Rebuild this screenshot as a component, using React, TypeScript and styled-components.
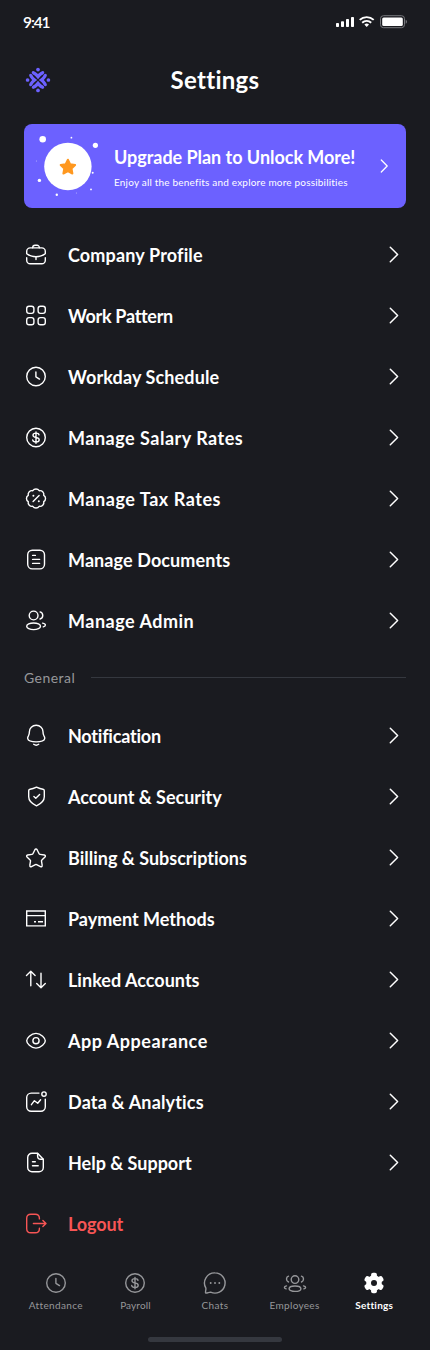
import React from "react";
import type { ReactNode } from "react";
import styled, { createGlobalStyle } from "styled-components";

const color = {
  bg: "#1a1b20",
  text: "#ffffff",
  muted: "#96979a",
  line: "#35383f",
  brand: "#6c61ff",
  danger: "#f75555",
  star: "#ff981f",
};

const GlobalStyle = createGlobalStyle`
  *, *::before, *::after { box-sizing: border-box; }
  body {
    margin: 0;
    background: ${color.bg};
    color: ${color.text};
    font-family: Lato, "Open Sans", sans-serif;
    font-variant-ligatures: none;
  }
`;

const Screen = styled.div`
  display: flex;
  flex-direction: column;
  width: 430px;
  height: 1350px;
  margin: 0 auto;
  overflow: hidden;
  background: ${color.bg};
`;

const StatusBar = styled.div`
  display: flex;
  align-items: center;
  justify-content: space-between;
  height: 44px;
  padding: 0 23px;
`;

const Clock = styled.span`
  padding-bottom: 1px;
  font-size: 15.5px;
  font-weight: 600;
  line-height: 20px;
  letter-spacing: -1.1px;
`;

const StatusIcons = styled.svg`
  display: block;
  width: 71px;
  height: 14px;
`;

const Header = styled.header`
  display: grid;
  grid-template-columns: 28px 1fr 28px;
  align-items: center;
  height: 72px;
  padding: 0 24px;
`;

const Title = styled.h1`
  margin: 0;
  font-size: 24px;
  font-weight: 700;
  line-height: 30px;
  letter-spacing: 0.28px;
  text-align: center;
`;

const Banner = styled.section`
  display: flex;
  align-items: center;
  height: 84px;
  margin: 8px 24px 0;
  padding: 0 17px 0 0;
  border-radius: 8px;
  background: ${color.brand};
`;

const BannerText = styled.div`
  display: flex;
  flex: 1;
  flex-direction: column;
  gap: 7px;
  padding-top: 2px;
`;

const BannerTitle = styled.h2`
  margin: 0;
  font-size: 18px;
  font-weight: 700;
  line-height: 22px;
  letter-spacing: -0.03px;
  white-space: nowrap;
`;

const BannerNote = styled.p`
  margin: 0;
  font-size: 10px;
  font-weight: 400;
  line-height: 14px;
  letter-spacing: 0.19px;
  white-space: nowrap;
`;

const Menu = styled.nav<{ $top?: number }>`
  display: flex;
  flex-direction: column;
  padding: ${(p) => p.$top ?? 0}px 24px 0;
`;

const MenuRow = styled.div<{ $danger?: boolean }>`
  display: flex;
  align-items: center;
  height: 61px;
  color: ${(p) => (p.$danger ? color.danger : color.text)};
`;

const MenuLabel = styled.span<{ $tracking: number }>`
  flex: 1;
  padding: 1px 0 0 20px;
  font-size: 18px;
  font-weight: 700;
  line-height: 24px;
  letter-spacing: ${(p) => p.$tracking}px;
  white-space: nowrap;
`;

const Divider = styled.div`
  display: flex;
  align-items: center;
  gap: 16px;
  height: 54px;
  padding: 0 24px;
  color: ${color.muted};
  font-size: 14px;
  font-weight: 400;
  line-height: 20px;
  letter-spacing: 0.45px;
`;

const DividerLine = styled.span`
  flex: 1;
  height: 1px;
  margin-bottom: 1px;
  background: ${color.line};
`;

const TabBar = styled.nav`
  display: grid;
  grid-template-columns: repeat(5, 1fr);
  height: 83px;
  padding: 17px 16px 0;
`;

const Tab = styled.div<{ $active?: boolean }>`
  display: flex;
  flex-direction: column;
  align-items: center;
  gap: 3px;
  color: ${(p) => (p.$active ? color.text : color.muted)};
`;

const TabLabel = styled.span<{ $bold?: boolean; $tracking: number }>`
  font-size: 10px;
  font-weight: ${(p) => (p.$bold ? 700 : 400)};
  line-height: 14px;
  letter-spacing: ${(p) => p.$tracking}px;
`;

const HomeIndicator = styled.div`
  align-self: center;
  width: 134px;
  height: 5px;
  border-radius: 3px;
  background: ${color.line};
`;

const IconSvg = styled.svg<{ $stroke?: number; $tall?: boolean }>`
  display: block;
  flex: none;
  width: 24px;
  height: ${(p) => (p.$tall ? 25 : 24)}px;
  overflow: visible;
  fill: none;
  stroke: currentColor;
  stroke-width: ${(p) => p.$stroke ?? 1.4};
  stroke-linecap: round;
  stroke-linejoin: round;
`;

const LogoSvg = styled.svg`
  display: block;
  width: 28px;
  height: 28px;
  fill: ${color.brand};
`;

const BadgeSvg = styled.svg`
  display: block;
  flex: none;
  width: 90px;
  height: 84px;
  fill: #fff;
`;

const BannerArrow = styled.svg`
  width: 10px;
  height: 16px;
  fill: none;
  stroke: #fff;
  stroke-width: 1.3;
  stroke-linecap: round;
  stroke-linejoin: round;
`;

// Eight convex arcs joined at shallow valleys.
const sealPath = (() => {
  const pts = Array.from({ length: 8 }, (_, k) => {
    const a = ((22.5 + 45 * k) * Math.PI) / 180;
    return `${(12 + 8.4 * Math.sin(a)).toFixed(2)} ${(12 - 8.4 * Math.cos(a)).toFixed(2)}`;
  });
  return `M${pts[7]}${pts.map((p) => `A3.8 3.8 0 0 1 ${p}`).join("")}z`;
})();

const dollar = (
  <>
    <circle cx="12" cy="12" r="9.3" />
    <path d="M15 9.4c-.2-1.1-1.3-1.8-3-1.8s-3 .8-3 2.1c0 1.4 1.3 1.9 3 2.2s3.2.9 3.2 2.4c0 1.4-1.3 2.2-3.2 2.2s-3.1-.8-3.3-2M12 6.4v11.4" />
  </>
);

const clock = (
  <>
    <circle cx="12" cy="12" r="9.3" />
    <path d="M11.9 7.5v4.8l3.6 2.3" />
  </>
);

const glyphs: Record<string, ReactNode> = {
  briefcase: (
    <>
      <path d="M8.7 5.2V5A2.3 2.3 0 0 1 11 2.7h2A2.3 2.3 0 0 1 15.3 5v.2" />
      <path d="M6.2 5.4h11.6a3.5 3.5 0 0 1 3.5 3.5v2.3c-2.5 1.9-5.7 3-9.3 3s-6.8-1.1-9.3-3V8.9a3.5 3.5 0 0 1 3.5-3.5z" />
      <path d="M2.7 15.2v2.5a3.6 3.6 0 0 0 3.6 3.6h11.4a3.6 3.6 0 0 0 3.6-3.6v-2.5M12 14.3v2.7" />
    </>
  ),
  grid: (
    <>
      <rect x="2.7" y="2.7" width="7.2" height="7.2" rx="2.3" />
      <rect x="14.1" y="2.7" width="7.2" height="7.2" rx="2.3" />
      <rect x="2.7" y="14.1" width="7.2" height="7.2" rx="2.3" />
      <rect x="14.1" y="14.1" width="7.2" height="7.2" rx="2.3" />
    </>
  ),
  clock,
  dollar,
  seal: (
    <>
      <path d={sealPath} />
      <path d="M9.1 14.9l6-6" />
      <path strokeWidth="2" d="M9.4 9.3h.01M14.8 14.8h.01" />
    </>
  ),
  document: (
    <>
      <rect x="3.7" y="2.7" width="16.8" height="18.7" rx="4.6" />
      <path d="M8.6 7.9h2.8M8.6 11.9h7M8.6 15.9h7" />
    </>
  ),
  users: (
    <>
      <circle cx="9.6" cy="7" r="4.4" />
      <ellipse cx="9.6" cy="17.8" rx="6.9" ry="3.3" />
      <path d="M16.1 3.4a3.7 3.7 0 0 1 0 7.1M18.6 14.6c1.7.3 2.8 1 2.8 1.9s-.8 1.5-2.1 1.9" />
    </>
  ),
  bell: (
    <>
      <path d="M12.2 1.8c-4 0-6.8 3-6.8 6.5 0 2.4-.4 3-1 4.1-.6 1-.9 1.9-.7 2.8.5 2.4 4 3.2 8.5 3.2s8-.8 8.5-3.2c.2-.9-.1-1.8-.7-2.8-.6-1.1-1-1.7-1-4.1 0-3.5-2.8-6.5-6.8-6.5z" />
      <path d="M9.7 20.8c1.5 1.1 3.5 1.1 5 0" />
    </>
  ),
  shield: (
    <>
      <path d="M12.5 2.7c1.9.9 4.4 1.8 6.5 2.1.8.1 1.3.7 1.3 1.5v5.9c0 4.5-3.3 7-7.8 9.1-4.5-2.1-7.8-4.6-7.8-9.1V6.3c0-.8.5-1.4 1.3-1.5 2.1-.3 4.6-1.2 6.500-2.100z" />
      <path d="M9.9 12l1.9 1.8 3.8-3.8" />
    </>
  ),
  star: (
    <path d="M13.1 4.2l2 4a1.3 1.3 0 0 0 1 .7l4.3.6c1 .2 1.3 1.3.6 2l-3.1 3a1.3 1.3 0 0 0-.4 1.2l.7 4.2c.2 1-.8 1.7-1.7 1.3l-3.9-2a1.3 1.3 0 0 0-1.2 0l-3.9 2c-.9.4-1.9-.3-1.7-1.3l.7-4.2a1.3 1.3 0 0 0-.4-1.2L3 11.5c-.7-.7-.4-1.8.6-2l4.3-.6a1.3 1.3 0 0 0 1-.7l2-4c.5-.9 1.7-.9 2.2 0z" />
  ),
  card: (
    <g strokeLinejoin="miter" strokeLinecap="butt">
      <path d="M2.7 4.5h18.6v14.9H2.7zM2.7 9.1h18.6M10 15.2h2M14 15.2h5" />
    </g>
  ),
  transfer: (
    <path d="M6.8 18.3V4M2.5 7.9L6.8 3.8l4.3 4.1M17 5.8v14.3M12.7 16.1l4.3 4.1 4.3-4.1" />
  ),
  eye: (
    <>
      <path d="M2.7 12.2c0-2.4 4-7.3 9.3-7.3s9.3 4.9 9.3 7.3-4 7.4-9.3 7.4-9.3-5-9.3-7.4z" />
      <circle cx="12" cy="12.2" r="3.1" />
    </>
  ),
  analytics: (
    <>
      <path d="M15 3.6H7.2a4.5 4.5 0 0 0-4.5 4.5v9.2a4.5 4.5 0 0 0 4.5 4.5h9.6a4.5 4.5 0 0 0 4.5-4.5V9.6" />
      <circle cx="20" cy="4.6" r="2.2" />
      <path d="M7.4 15.2l3-4 3.3 2.6 2.9-3.6" />
    </>
  ),
  page: (
    <>
      <path d="M13.6 2.7H8A4.300 4.300 0 0 0 3.700 7v10A4.300 4.300 0 0 0 8 21.300h7A4.300 4.300 0 0 0 19.300 17V8.700z" />
      <path d="M13.6 2.9v2.5c0 1.9 1.3 3.3 3.2 3.3h2.4M8.5 11.2h2.8M8.5 15.2h5.7" />
    </>
  ),
  logout: (
    <path d="M15.4 7.4V6.8c0-2.6-1.5-4.1-4.1-4.1H6.8c-2.6 0-4.1 1.5-4.1 4.1v10.4c0 2.6 1.5 4.1 4.1 4.1h4.5c2.6 0 4.1-1.5 4.1-4.1v-.6M9.4 12h12.4M18.9 8.9L22 12l-3.1 3.1" />
  ),
  chat: (
    <>
      <path d="M12 1.9a10.1 10.1 0 1 1-4.4 19.2c-1.6-.1-3.3 1.2-4.9.9-.9-.3.5-2.8.2-4.9A10.1 10.1 0 0 1 12 1.9z" />
      <path strokeWidth="1.9" d="M7.7 12h.01M12 12h.01M16.3 12h.01" />
    </>
  ),
  team: (
    <>
      <circle cx="12" cy="8.6" r="3.8" />
      <ellipse cx="12" cy="17.7" rx="5.9" ry="2.7" />
      <path d="M5.5 5.2a3.1 3.1 0 0 0 0 5.8M18.5 5.2a3.1 3.1 0 0 1 0 5.8M3.5 14.9c-1.3.3-2.1.8-2.1 1.5s.6 1.2 1.7 1.5M20.5 14.9c1.3.3 2.1.8 2.1 1.5s-.6 1.2-1.7 1.5" />
    </>
  ),
  gear: (
    <g fill="currentColor" stroke="none" transform="translate(12 12)">
      <circle r="7.8" />
      {[0, 60, 120, 180, 240, 300].map((a) => (
        <rect key={a} x="-2.9" y="-10.2" width="5.8" height="7" rx="1.9" transform={`rotate(${a})`} />
      ))}
      <circle r="3" fill={color.bg} />
    </g>
  ),
  chevron: <path d="M8.3 4.8l7.3 7.2-7.3 7.2" />,
};

// The tall box adds half a unit above and below, so the glyph centres exactly in an odd-height row.
function Icon({ name, stroke, tall }: { name: string; stroke?: number; tall?: boolean }) {
  return (
    <IconSvg viewBox={tall ? "0 -0.5 24 25" : "0 0 24 24"} $stroke={stroke} $tall={tall} aria-hidden="true">
      {glyphs[name]}
    </IconSvg>
  );
}

function Logo() {
  return (
    <LogoSvg viewBox="-14 -14 28 28" aria-hidden="true">
      {[0, 90, 180, 270].map((a) => (
        <g key={a} transform={`rotate(${a})`}>
          <circle cy="-10.4" r="1.85" />
          <path d="M0-.8L-2.1-3.3C-3-4.500-4.300-5-5.600-6-7.100-7.200-5.900-9.300-4.200-8.800-2.500-8.200-1.300-7 0-5.900 1.300-7 2.500-8.200 4.200-8.800 5.900-9.300 7.100-7.200 5.600-6 4.300-5 3-4.500 2.100-3.300z" />
        </g>
      ))}
    </LogoSvg>
  );
}

const sparkles: [number, number, number][] = [
  [18.7, 15.3, 3.3],
  [47.4, 13.7, 0.9],
  [71.4, 21.3, 2.6],
  [68.7, 48.7, 1],
  [15.4, 56.4, 1.7],
  [32.8, 70.7, 1.2],
  [67, 65.4, 0.9],
  [12.3, 37, 0.4],
  [52.3, 69, 0.4],
];

function PlanBadge() {
  return (
    <BadgeSvg viewBox="0 0 90 84" aria-hidden="true">
      {sparkles.map(([x, y, r]) => (
        <circle key={`${x}-${y}`} cx={x} cy={y} r={r} />
      ))}
      <circle cx="43.9" cy="42.5" r="23.7" />
      <path
        fill={color.star}
        stroke={color.star}
        strokeWidth="2"
        strokeLinejoin="round"
        d="M43.9 35.7l2.2 4.6 5 .7-3.6 3.5.9 5-4.5-2.4-4.5 2.4.9-5-3.6-3.5 5-.7z"
      />
    </BadgeSvg>
  );
}

function DeviceStatus() {
  return (
    <StatusIcons viewBox="336 16 71 14" aria-hidden="true">
      <g fill="#fff">
        <rect x="336" y="24" width="3" height="4" rx="0.8" />
        <rect x="341" y="22.2" width="3" height="5.8" rx="0.8" />
        <rect x="346" y="20" width="3" height="8" rx="0.8" />
        <rect x="351" y="18" width="3" height="10" rx="0.8" />
        <rect x="382.2" y="18.5" width="20.6" height="8.5" rx="1.5" />
        <path d="M366.7 27.9l-2.3-2.4a3.4 3.4 0 0 1 4.6 0z" />
      </g>
      <g fill="none" stroke="#fff" strokeWidth="1.9">
        <path d="M359.7 20.9a10.1 10.1 0 0 1 14 0M362.2 23.7a6.5 6.5 0 0 1 9 0" />
      </g>
      <rect x="380.5" y="16.7" width="24" height="12" rx="3" fill="none" stroke="#77787c" />
      <path d="M405.7 20.8v4a2.2 2.2 0 0 0 0-4z" fill="#77787c" />
    </StatusIcons>
  );
}

type Item = { icon: string; label: string; tracking: number; danger?: boolean };

const company: Item[] = [
  { icon: "briefcase", label: "Company Profile", tracking: 0.15 },
  { icon: "grid", label: "Work Pattern", tracking: -0.3 },
  { icon: "clock", label: "Workday Schedule", tracking: 0.12 },
  { icon: "dollar", label: "Manage Salary Rates", tracking: 0.5 },
  { icon: "seal", label: "Manage Tax Rates", tracking: 0.55 },
  { icon: "document", label: "Manage Documents", tracking: 0.1 },
  { icon: "users", label: "Manage Admin", tracking: 0.5 },
];

const general: Item[] = [
  { icon: "bell", label: "Notification", tracking: -0.22 },
  { icon: "shield", label: "Account & Security", tracking: -0.02 },
  { icon: "star", label: "Billing & Subscriptions", tracking: 0 },
  { icon: "card", label: "Payment Methods", tracking: 0.01 },
  { icon: "transfer", label: "Linked Accounts", tracking: 0.02 },
  { icon: "eye", label: "App Appearance", tracking: 0.53 },
  { icon: "analytics", label: "Data & Analytics", tracking: 0.17 },
  { icon: "page", label: "Help & Support", tracking: -0.01 },
  { icon: "logout", label: "Logout", tracking: -0.1, danger: true },
];

const tabs = [
  { icon: "clock", label: "Attendance", tracking: 0.35 },
  { icon: "dollar", label: "Payroll", tracking: 0.12 },
  { icon: "chat", label: "Chats", tracking: 0.38 },
  { icon: "team", label: "Employees", tracking: 0.3 },
  { icon: "gear", label: "Settings", tracking: 0.25, active: true },
];

function MenuList({ items, top }: { items: Item[]; top?: number }) {
  return (
    <Menu $top={top}>
      {items.map((item) => (
        <MenuRow key={item.label} $danger={item.danger}>
          <Icon name={item.icon} tall />
          <MenuLabel $tracking={item.tracking}>{item.label}</MenuLabel>
          {!item.danger && <Icon name="chevron" stroke={1.5} tall />}
        </MenuRow>
      ))}
    </Menu>
  );
}

export default function App() {
  return (
    <>
      <GlobalStyle />
      <Screen>
        <StatusBar>
          <Clock>9:41</Clock>
          <DeviceStatus />
        </StatusBar>
        <Header>
          <Logo />
          <Title>Settings</Title>
        </Header>
        <Banner>
          <PlanBadge />
          <BannerText>
            <BannerTitle>Upgrade Plan to Unlock More!</BannerTitle>
            <BannerNote>Enjoy all the benefits and explore more possibilities</BannerNote>
          </BannerText>
          <BannerArrow viewBox="0 0 10 16" aria-hidden="true">
            <path d="M2.3 2l5.9 6-5.9 6" />
          </BannerArrow>
        </Banner>
        <MenuList items={company} top={16} />
        <Divider>
          General
          <DividerLine />
        </Divider>
        <MenuList items={general} />
        <TabBar>
          {tabs.map((tab) => (
            <Tab key={tab.label} $active={tab.active}>
              <Icon name={tab.icon} />
              <TabLabel $bold={tab.active} $tracking={tab.tracking}>
                {tab.label}
              </TabLabel>
            </Tab>
          ))}
        </TabBar>
        <HomeIndicator />
      </Screen>
    </>
  );
}
